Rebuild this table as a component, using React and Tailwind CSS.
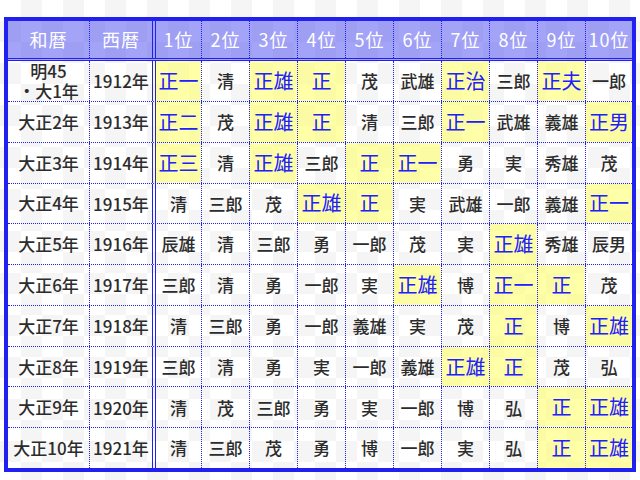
const rows = [
  ['明45\n・大1年', '1912年', ['正一', '清', '正雄', '正', '茂', '武雄', '正治', '三郎', '正夫', '一郎']],
  ['大正2年', '1913年', ['正二', '茂', '正雄', '正', '清', '三郎', '正一', '武雄', '義雄', '正男']],
  ['大正3年', '1914年', ['正三', '清', '正雄', '三郎', '正', '正一', '勇', '実', '秀雄', '茂']],
  ['大正4年', '1915年', ['清', '三郎', '茂', '正雄', '正', '実', '武雄', '一郎', '義雄', '正一']],
  ['大正5年', '1916年', ['辰雄', '清', '三郎', '勇', '一郎', '茂', '実', '正雄', '秀雄', '辰男']],
  ['大正6年', '1917年', ['三郎', '清', '勇', '一郎', '実', '正雄', '博', '正一', '正', '茂']],
  ['大正7年', '1918年', ['清', '三郎', '勇', '一郎', '義雄', '実', '茂', '正', '博', '正雄']],
  ['大正8年', '1919年', ['三郎', '清', '勇', '実', '一郎', '義雄', '正雄', '正', '茂', '弘']],
  ['大正9年', '1920年', ['清', '茂', '三郎', '勇', '実', '一郎', '博', '弘', '正', '正雄']],
  ['大正10年', '1921年', ['清', '三郎', '茂', '勇', '博', '一郎', '実', '弘', '正', '正雄']],
];

const ranks = ['1位', '2位', '3位', '4位', '5位', '6位', '7位', '8位', '9位', '10位'];

// width of each rank column, borders included
const rankCls = (i) => {
  if (i === 0) return 'w-[49px] border-l-4 border-double border-[#2020f0]';
  if (i === 9) return 'flex-1 border-l border-dotted border-[#2020f0]';
  return 'w-[48px] border-l border-dotted border-[#2020f0]';
};

export default function App() {
  return (
    <div
      className="w-[640px] h-[480px] pt-[17px] pl-[4px] bg-white bg-[image:repeating-conic-gradient(#f5f5f5_0_25%,#ffffff_0_50%)] bg-[length:42px_42px]"
      style={{ fontFamily: '"Noto Sans CJK JP", "Noto Sans", sans-serif' }}
    >
      <div className="w-[632px] h-[455px] border-4 border-[#2020f0] flex flex-col">
        <div className="h-[40px] shrink-0 flex border-b-[3px] border-double border-[#2020f0] bg-[#4848f0]/50 text-white text-[18px] tracking-[1px]">
          <div className="w-[81px] flex items-center justify-center">和暦</div>
          <div className="w-[63px] flex items-center justify-center border-l border-dotted border-[#2020f0]">西暦</div>
          {ranks.map((r, i) => (
            <div key={r} className={`${rankCls(i)} flex items-center justify-center`}>{r}</div>
          ))}
        </div>
        {rows.map(([wa, sei, names], ri) => (
          <div
            key={sei}
            className={`flex-1 flex text-[17px] text-[#2c2c2c] font-medium ${ri > 0 ? 'border-t border-dotted border-[#2020f0]' : ''}`}
          >
            <div className="w-[81px] flex items-center justify-center text-center leading-[20px] whitespace-pre-line">{wa}</div>
            <div className="w-[63px] flex items-center justify-center border-l border-dotted border-[#2020f0]">{sei}</div>
            {names.map((n, i) => {
              const hit = n.startsWith('正');
              return (
                <div
                  key={i}
                  className={`${rankCls(i)} flex items-center justify-center ${
                    hit ? 'bg-[#ffff60]/55 text-[#2020ff] text-[20px] font-normal' : ''
                  }`}
                >
                  {n}
                </div>
              );
            })}
          </div>
        ))}
      </div>
    </div>
  );
}
